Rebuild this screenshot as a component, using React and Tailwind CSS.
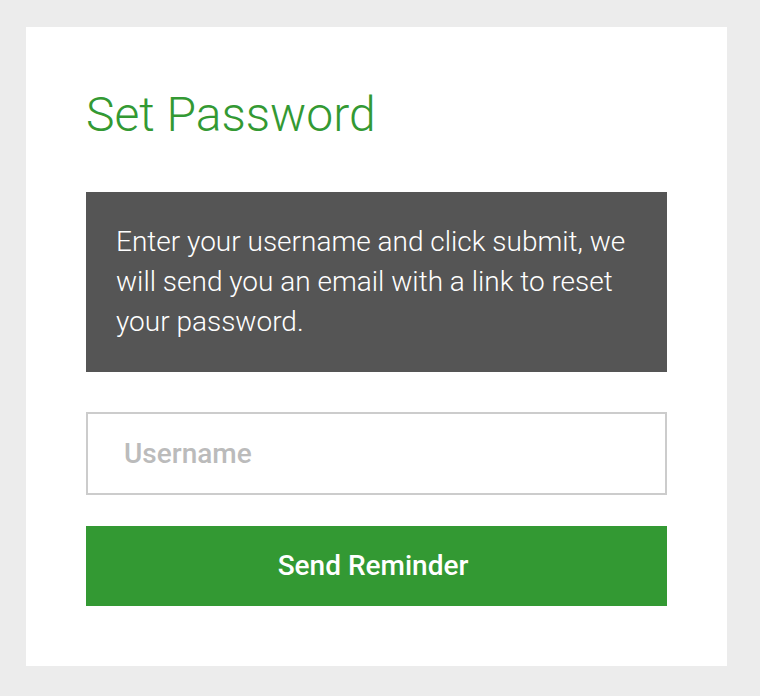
export default function App() {
  return (
    <div className="min-h-[696px] bg-[#ececec] pt-[27px] pl-[26px] font-['Roboto',sans-serif]">
      {/* Card */}
      <div className="w-[701px] h-[639px] bg-white p-[60px]">
        <h1 className="text-[48px] font-light leading-[56px] text-[#339933] mb-[49px]">
          Set Password
        </h1>

        {/* Info box */}
        <div className="bg-[#555555] px-[30px] py-[30px] text-white text-[28px] font-light leading-[40px]">
          Enter your username and click submit, we will send you an email with a link to reset your password.
        </div>

        {/* Username */}
        <input
          type="text"
          placeholder="Username"
          className="mt-[40px] block w-full h-[83px] border-2 border-[#cccccc] bg-white pl-[36px] text-[28px] font-medium text-[#555] placeholder:text-[#bbbbbb] outline-none"
        />

        <button className="mt-[31px] block w-full h-[80px] bg-[#339933] pr-[7px] text-white text-[28px] font-medium">
          Send Reminder
        </button>
      </div>
    </div>
  );
}
